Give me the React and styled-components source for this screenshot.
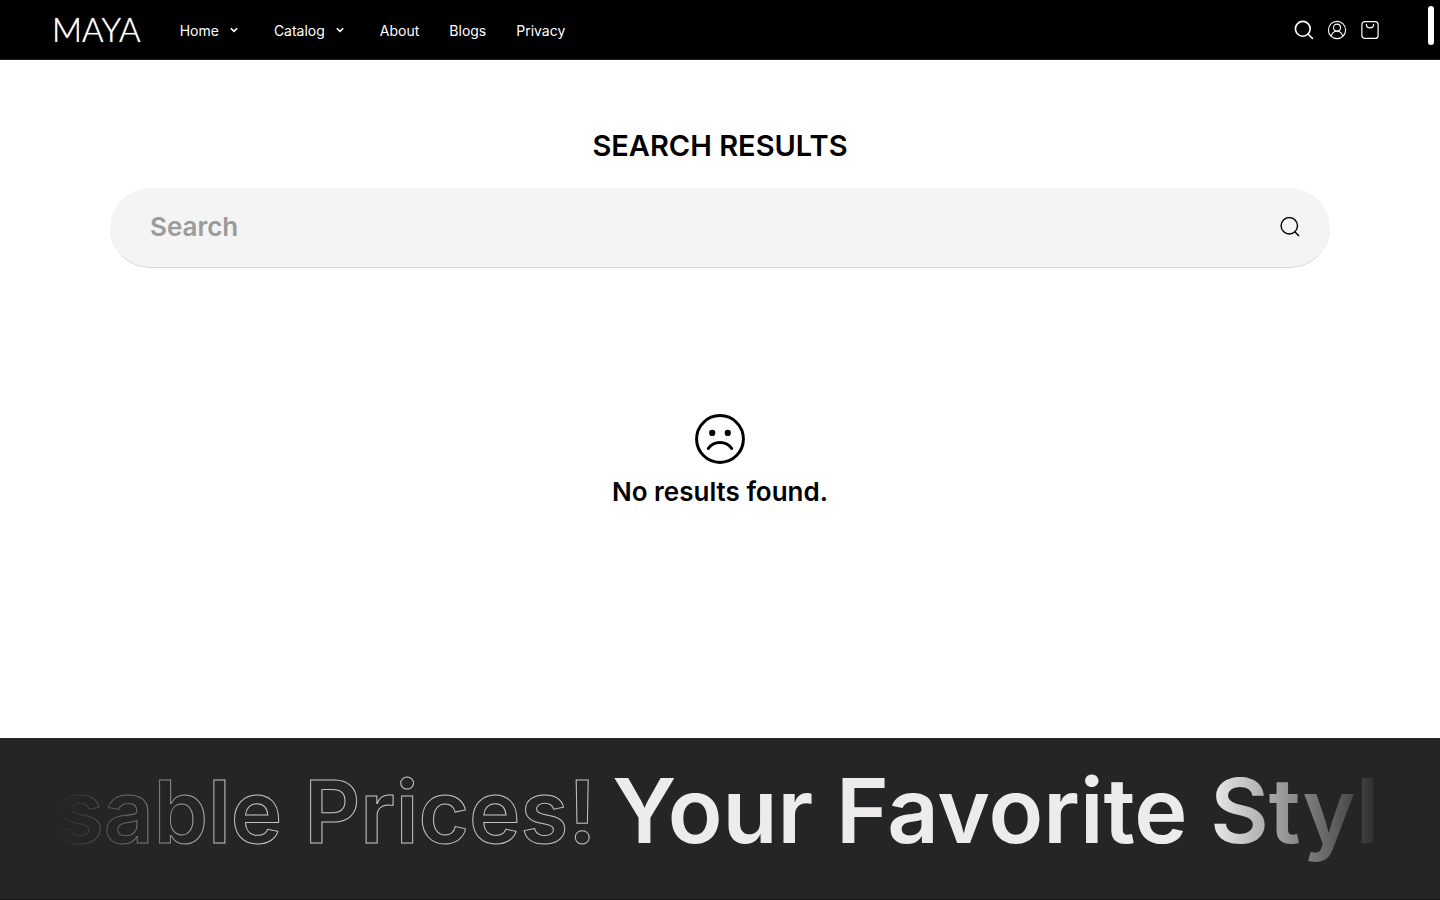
import React from "react";
import styled, { createGlobalStyle } from "styled-components";

const GlobalStyle = createGlobalStyle`
  *, *::before, *::after { box-sizing: border-box; }
  body {
    margin: 0;
    background: #fff;
    color: #000;
    font-family: Inter, "Liberation Sans", sans-serif;
    overflow-x: hidden;
    scrollbar-width: none;
  }
`;

const Page = styled.div`
  position: relative;
  display: flex;
  flex-direction: column;
  min-height: 100vh;
`;

const Header = styled.header`
  display: flex;
  align-items: center;
  gap: 39px;
  height: 60px;
  padding: 0 60px 0 52px;
  background: #000;
  border-bottom: 1px solid #232323;
  color: #fff;
`;

const Logo = styled.a`
  padding-bottom: 2px;
  color: #fff;
  font: 300 33px/40px Lato, sans-serif;
  text-decoration: none;
  text-shadow: 0 0 1px #fff;
`;

const Nav = styled.nav`
  display: flex;
  align-items: center;
  gap: 30px;
  flex: 1;
  padding-top: 2px;
`;

const NavLink = styled.a`
  display: flex;
  align-items: center;
  gap: 10px;
  padding-right: ${(p) => (p.$menu ? "5px" : "0")};
  color: #fff;
  font-size: 14px;
  line-height: 20px;
  text-decoration: none;
`;

const Actions = styled.div`
  display: flex;
  align-items: center;
  gap: 13px;
`;

const IconButton = styled.button`
  display: flex;
  padding: 0;
  border: 0;
  background: none;
  color: inherit;
  cursor: pointer;
`;

const ScrollThumb = styled.div`
  position: absolute;
  top: 6px;
  right: 6px;
  width: 6px;
  height: 39px;
  border-radius: 3px;
  background: #fff;
`;

const Main = styled.main`
  flex: 1;
  padding: 68px 110px 0;
  text-align: center;
`;

const Title = styled.h1`
  margin: 0 0 24px;
  font-size: 29px;
  font-weight: 600;
  line-height: 36px;
`;

const SearchForm = styled.form`
  display: flex;
  align-items: center;
  height: 80px;
  padding: 0 30px 2px 40px;
  border-bottom: 1px solid #d9d9d9;
  border-radius: 40px;
  background: #f4f4f4;
`;

const SearchInput = styled.input`
  flex: 1;
  min-width: 0;
  padding: 0;
  border: 0;
  outline: 0;
  background: none;
  color: #000;
  font: 600 26px/32px Inter, sans-serif;
  &::placeholder { color: #9b9b9b; opacity: 1; }
`;

const Empty = styled.section`
  display: flex;
  flex-direction: column;
  align-items: center;
  gap: 12px;
  padding: 146px 0 220px;
`;

const EmptyText = styled.p`
  margin: 0;
  font-size: 26px;
  font-weight: 600;
  line-height: 32px;
`;

const Banner = styled.section`
  height: 161px;
  padding: 19px 56px 0;
  background: #252527;
`;

const Marquee = styled.div`
  display: flex;
  align-items: baseline;
  gap: 16px;
  overflow: hidden;
  white-space: nowrap;
  font-weight: 600;
  line-height: 108px;
  mask-image: linear-gradient(90deg, transparent, #000 13%, #000 87%, transparent);
`;

const Phrase = styled.span`
  flex: none;
  font-size: ${(p) => (p.$outline ? "87px" : "90px")};
  color: ${(p) => (p.$outline ? "transparent" : "#edebec")};
  -webkit-text-stroke: ${(p) => (p.$outline ? "1px #c4c3c4" : "0")};
`;

const Footer = styled.footer`
  height: 1px;
  background: #1b1519;
`;

const Chevron = () => (
  <svg width="10" height="10" viewBox="0 0 10 10" fill="none" stroke="currentColor" strokeWidth="1.6">
    <path d="M1.800 2.200 5 5.400 8.200 2.200" />
  </svg>
);

const SearchIcon = () => (
  <svg width="20" height="20" viewBox="0 0 20 20" fill="none" stroke="currentColor" strokeWidth="1.6" strokeLinecap="round">
    <circle cx="8.800" cy="8.800" r="7.400" />
    <path d="m14.200 14.200 4.200 4.200" />
  </svg>
);

const ThinSearchIcon = () => (
  <svg width="20" height="20" viewBox="0 0 20 20" fill="none" stroke="currentColor" strokeWidth="1.4">
    <circle cx="9.300" cy="8.800" r="8.200" />
    <path d="m14.600 14.500 4.400 4.600" />
  </svg>
);

const UserIcon = () => (
  <svg width="20" height="20" viewBox="0 0 20 20" fill="none" stroke="currentColor" strokeWidth="1.1">
    <circle cx="10" cy="10" r="8.600" />
    <circle cx="10" cy="7.600" r="3.500" />
    <path d="M4.300 16.400c.5-3.100 2.800-5.200 5.700-5.200s5.200 2.100 5.700 5.200" />
  </svg>
);

const BagIcon = () => (
  <svg width="20" height="20" viewBox="0 0 20 20" fill="none" stroke="currentColor" strokeWidth="1.2" strokeLinecap="round">
    <rect x="1.900" y="1.600" width="16.200" height="16.800" rx="3" />
    <path d="M6.300 4.300c.1 2.200 1.600 3.600 3.700 3.600s3.600-1.400 3.700-3.600" />
  </svg>
);

const SadFace = () => (
  <svg width="50" height="50" viewBox="0 0 50 50" fill="none" stroke="currentColor" strokeWidth="3" strokeLinecap="round">
    <circle cx="25" cy="25" r="23.400" />
    <circle cx="17.200" cy="18.900" r="3.100" fill="currentColor" stroke="none" />
    <circle cx="32.800" cy="18.900" r="3.100" fill="currentColor" stroke="none" />
    <path d="M13.300 34.500C15.800 30.700 20 28.400 25 28.400s9.200 2.300 11.700 6.100" />
  </svg>
);

const links = [
  { label: "Home", menu: true },
  { label: "Catalog", menu: true },
  { label: "About" },
  { label: "Blogs" },
  { label: "Privacy" },
];

export default function App() {
  return (
    <Page>
      <GlobalStyle />
      <Header>
        <Logo href="#">MAYA</Logo>
        <Nav>
          {links.map((l) => (
            <NavLink key={l.label} href="#" $menu={l.menu}>
              {l.label}
              {l.menu && <Chevron />}
            </NavLink>
          ))}
        </Nav>
        <Actions>
          <IconButton aria-label="Open search"><SearchIcon /></IconButton>
          <IconButton aria-label="Account"><UserIcon /></IconButton>
          <IconButton aria-label="Cart"><BagIcon /></IconButton>
        </Actions>
      </Header>
      <Main>
        <Title>SEARCH RESULTS</Title>
        <SearchForm role="search" onSubmit={(e) => e.preventDefault()}>
          <SearchInput type="text" placeholder="Search" aria-label="Search" />
          <IconButton type="submit" aria-label="Submit search"><ThinSearchIcon /></IconButton>
        </SearchForm>
        <Empty>
          <SadFace />
          <EmptyText>No results found.</EmptyText>
        </Empty>
      </Main>
      <Banner>
        <Marquee>
          <Phrase $outline>sable Prices!</Phrase>
          <Phrase>Your Favorite Styl</Phrase>
        </Marquee>
      </Banner>
      <Footer />
      <ScrollThumb />
    </Page>
  );
}
